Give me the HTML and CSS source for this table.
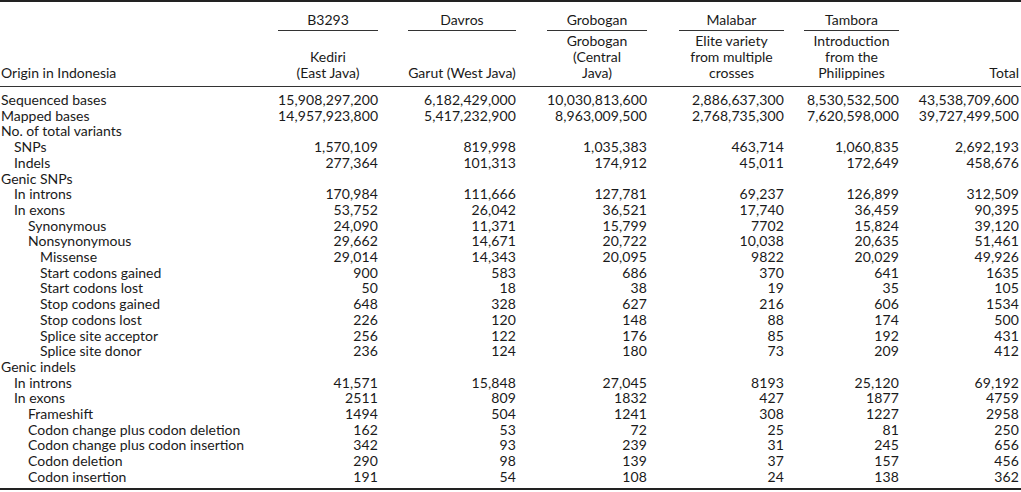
FILE: index.html
```html
<!DOCTYPE html>
<html lang="en">
<head>
<meta charset="utf-8">
<title>Variants by cultivar</title>
<link rel="stylesheet" href="styles.css">
</head>
<body>
<table class="tbl">
  <colgroup>
    <col class="w0">
    <col class="w1">
    <col class="w2">
    <col class="w3">
    <col class="w4">
    <col class="w5">
    <col class="w6">
  </colgroup>
  <thead>
    <tr class="grp">
      <th class="lbl"></th>
      <th class="c c1"><span class="ul">B3293</span></th>
      <th class="c c2"><span class="ul">Davros</span></th>
      <th class="c c3"><span class="ul">Grobogan</span></th>
      <th class="c c4"><span class="ul">Malabar</span></th>
      <th class="c c5"><span class="ul">Tambora</span></th>
      <th class="c c6"></th>
    </tr>
    <tr class="sub">
      <th class="lbl">Origin in Indonesia</th>
      <th class="c c1">Kediri<br>(East Java)</th>
      <th class="c c2">Garut (West Java)</th>
      <th class="c c3">Grobogan<br>(Central<br>Java)</th>
      <th class="c c4">Elite variety<br>from multiple<br>crosses</th>
      <th class="c c5">Introduction<br>from the<br>Philippines</th>
      <th class="c c6 tot">Total</th>
    </tr>
  </thead>
  <tbody>
    <tr><td class="lbl l0">Sequenced bases</td><td class="n c1">15,908,297,200</td><td class="n c2">6,182,429,000</td><td class="n c3">10,030,813,600</td><td class="n c4">2,886,637,300</td><td class="n c5">8,530,532,500</td><td class="n c6">43,538,709,600</td></tr>
    <tr><td class="lbl l0">Mapped bases</td><td class="n c1">14,957,923,800</td><td class="n c2">5,417,232,900</td><td class="n c3">8,963,009,500</td><td class="n c4">2,768,735,300</td><td class="n c5">7,620,598,000</td><td class="n c6">39,727,499,500</td></tr>
    <tr><td class="lbl l0">No. of total variants</td><td class="n c1"></td><td class="n c2"></td><td class="n c3"></td><td class="n c4"></td><td class="n c5"></td><td class="n c6"></td></tr>
    <tr><td class="lbl l1">SNPs</td><td class="n c1">1,570,109</td><td class="n c2">819,998</td><td class="n c3">1,035,383</td><td class="n c4">463,714</td><td class="n c5">1,060,835</td><td class="n c6">2,692,193</td></tr>
    <tr><td class="lbl l1">Indels</td><td class="n c1">277,364</td><td class="n c2">101,313</td><td class="n c3">174,912</td><td class="n c4">45,011</td><td class="n c5">172,649</td><td class="n c6">458,676</td></tr>
    <tr><td class="lbl l0">Genic SNPs</td><td class="n c1"></td><td class="n c2"></td><td class="n c3"></td><td class="n c4"></td><td class="n c5"></td><td class="n c6"></td></tr>
    <tr><td class="lbl l1">In introns</td><td class="n c1">170,984</td><td class="n c2">111,666</td><td class="n c3">127,781</td><td class="n c4">69,237</td><td class="n c5">126,899</td><td class="n c6">312,509</td></tr>
    <tr><td class="lbl l1">In exons</td><td class="n c1">53,752</td><td class="n c2">26,042</td><td class="n c3">36,521</td><td class="n c4">17,740</td><td class="n c5">36,459</td><td class="n c6">90,395</td></tr>
    <tr><td class="lbl l2">Synonymous</td><td class="n c1">24,090</td><td class="n c2">11,371</td><td class="n c3">15,799</td><td class="n c4">7702</td><td class="n c5">15,824</td><td class="n c6">39,120</td></tr>
    <tr><td class="lbl l2">Nonsynonymous</td><td class="n c1">29,662</td><td class="n c2">14,671</td><td class="n c3">20,722</td><td class="n c4">10,038</td><td class="n c5">20,635</td><td class="n c6">51,461</td></tr>
    <tr><td class="lbl l3">Missense</td><td class="n c1">29,014</td><td class="n c2">14,343</td><td class="n c3">20,095</td><td class="n c4">9822</td><td class="n c5">20,029</td><td class="n c6">49,926</td></tr>
    <tr><td class="lbl l3">Start codons gained</td><td class="n c1">900</td><td class="n c2">583</td><td class="n c3">686</td><td class="n c4">370</td><td class="n c5">641</td><td class="n c6">1635</td></tr>
    <tr><td class="lbl l3">Start codons lost</td><td class="n c1">50</td><td class="n c2">18</td><td class="n c3">38</td><td class="n c4">19</td><td class="n c5">35</td><td class="n c6">105</td></tr>
    <tr><td class="lbl l3">Stop codons gained</td><td class="n c1">648</td><td class="n c2">328</td><td class="n c3">627</td><td class="n c4">216</td><td class="n c5">606</td><td class="n c6">1534</td></tr>
    <tr><td class="lbl l3">Stop codons lost</td><td class="n c1">226</td><td class="n c2">120</td><td class="n c3">148</td><td class="n c4">88</td><td class="n c5">174</td><td class="n c6">500</td></tr>
    <tr><td class="lbl l3">Splice site acceptor</td><td class="n c1">256</td><td class="n c2">122</td><td class="n c3">176</td><td class="n c4">85</td><td class="n c5">192</td><td class="n c6">431</td></tr>
    <tr><td class="lbl l3">Splice site donor</td><td class="n c1">236</td><td class="n c2">124</td><td class="n c3">180</td><td class="n c4">73</td><td class="n c5">209</td><td class="n c6">412</td></tr>
    <tr><td class="lbl l0">Genic indels</td><td class="n c1"></td><td class="n c2"></td><td class="n c3"></td><td class="n c4"></td><td class="n c5"></td><td class="n c6"></td></tr>
    <tr><td class="lbl l1">In introns</td><td class="n c1">41,571</td><td class="n c2">15,848</td><td class="n c3">27,045</td><td class="n c4">8193</td><td class="n c5">25,120</td><td class="n c6">69,192</td></tr>
    <tr><td class="lbl l1">In exons</td><td class="n c1">2511</td><td class="n c2">809</td><td class="n c3">1832</td><td class="n c4">427</td><td class="n c5">1877</td><td class="n c6">4759</td></tr>
    <tr><td class="lbl l2">Frameshift</td><td class="n c1">1494</td><td class="n c2">504</td><td class="n c3">1241</td><td class="n c4">308</td><td class="n c5">1227</td><td class="n c6">2958</td></tr>
    <tr><td class="lbl l2">Codon change plus codon deletion</td><td class="n c1">162</td><td class="n c2">53</td><td class="n c3">72</td><td class="n c4">25</td><td class="n c5">81</td><td class="n c6">250</td></tr>
    <tr><td class="lbl l2">Codon change plus codon insertion</td><td class="n c1">342</td><td class="n c2">93</td><td class="n c3">239</td><td class="n c4">31</td><td class="n c5">245</td><td class="n c6">656</td></tr>
    <tr><td class="lbl l2">Codon deletion</td><td class="n c1">290</td><td class="n c2">98</td><td class="n c3">139</td><td class="n c4">37</td><td class="n c5">157</td><td class="n c6">456</td></tr>
    <tr><td class="lbl l2">Codon insertion</td><td class="n c1">191</td><td class="n c2">54</td><td class="n c3">108</td><td class="n c4">24</td><td class="n c5">138</td><td class="n c6">362</td></tr>
  </tbody>
</table>
</body>
</html>
```
FILE: styles.css
```css
html, body {
  margin: 0;
  padding: 0;
  background: #ffffff;
}

body {
  font-family: "Lato", "Open Sans", "DejaVu Sans", sans-serif;
  font-size: 14px;
  color: #1a1a1a;
}

.tbl {
  width: 1021px;
  table-layout: fixed;
  border-collapse: collapse;
  border-spacing: 0;
  border-top: 2px solid #222;
  border-bottom: 2px solid #222;
}

/* column widths (gap to the left of each data column included) */
.w0 { width: 278px; }
.w1 { width: 100px; }
.w2 { width: 138px; }
.w3 { width: 131px; }
.w4 { width: 137px; }
.w5 { width: 115px; }
.w6 { width: 122px; }

.tbl th,
.tbl td {
  padding: 0;
  font-weight: 400;
  white-space: nowrap;
}

.tbl .lbl {
  text-align: left;
  padding-left: 1px;
}

/* header */
.grp th {
  line-height: 16px;
  padding-top: 10px;
  text-align: center;
}

.ul {
  display: block;
  padding-bottom: 2px;
  border-bottom: 1px solid #333;
}

.sub th {
  line-height: 16px;
  padding-top: 2px;
  padding-bottom: 5px;
  vertical-align: bottom;
  text-align: center;
  border-bottom: 1px solid #333;
}

.sub .tot {
  text-align: right;
}

/* column gaps */
.tbl .c2 { padding-left: 30px; }
.tbl .c3 { padding-left: 31px; }
.tbl .c4 { padding-left: 32px; }
.tbl .c5 { padding-left: 20px; }
.tbl .c6 { padding-left: 12px; padding-right: 2px; }

/* body */
.tbl td {
  line-height: 15.7px;
}

.n {
  text-align: right;
  letter-spacing: 0.1px;
}

tbody tr:first-child td {
  padding-top: 5px;
}

tbody tr:last-child td {
  padding-bottom: 3px;
}

.tbl .l1 { padding-left: 14px; }
.tbl .l2 { padding-left: 28px; }
.tbl .l3 { padding-left: 40px; }
```
